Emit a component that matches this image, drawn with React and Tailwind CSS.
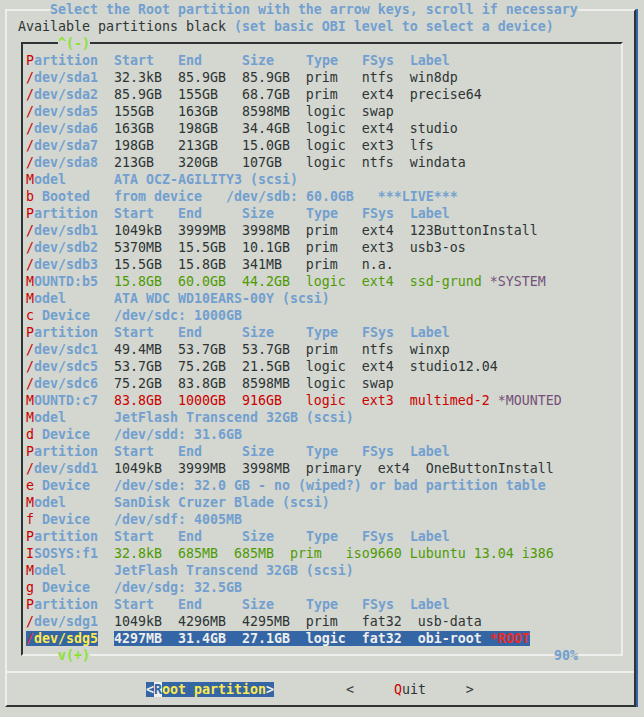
import React from "react";

const RED = "text-[#cc0000]";
const BLUE = "text-[#729fcf] font-bold";
const DARK = "text-[#2e3436]";
const GREEN = "text-[#4e9a06]";
const PURPLE = "text-[#75507b]";

function Row({ children, className = "" }) {
  return <div className={`h-[17px] pt-px whitespace-pre ${className}`}>{children}</div>;
}

function Header() {
  return (
    <Row>
      <span className={RED}>P</span>
      <span className={BLUE}>artition</span>
      {"  "}
      <span className={BLUE}>Start</span>
      {"   "}
      <span className={BLUE}>End</span>
      {"     "}
      <span className={BLUE}>Size</span>
      {"    "}
      <span className={BLUE}>Type</span>
      {"   "}
      <span className={BLUE}>FSys</span>
      {"  "}
      <span className={BLUE}>Label</span>
    </Row>
  );
}

function Part({ first, rest, vals, tone = DARK, suffix }) {
  return (
    <Row>
      <span className={RED}>{first}</span>
      <span className={BLUE}>{rest}</span>
      {"  "}
      <span className={tone}>{vals}</span>
      {suffix ? (
        <>
          {" "}
          <span className={PURPLE}>{suffix}</span>
        </>
      ) : null}
    </Row>
  );
}

function Model({ value }) {
  return (
    <Row>
      <span className={RED}>M</span>
      <span className={BLUE}>odel</span>
      {"      "}
      <span className={BLUE}>{value}</span>
    </Row>
  );
}

function Device({ letter, value }) {
  return (
    <Row>
      <span className={RED}>{letter}</span>
      {" "}
      <span className={BLUE}>Device</span>
      {"   "}
      <span className={BLUE}>{value}</span>
    </Row>
  );
}

export default function App() {
  return (
    <div className="w-[644px] h-[717px] bg-[#d3d7cf] pt-[9px] pl-[5px] font-['DejaVu_Sans_Mono',monospace] text-[13.29px] leading-[17px] text-[#2e3436] overflow-hidden">
      <div className="w-[631px] h-[698px] border-2 border-t-[#eeeeec] border-l-[#eeeeec] border-r-[#2e3436] border-b-[#2e3436] shadow-[2px_0_0_#3465a4] flex flex-col">
        {/* title */}
        <Row className="-mt-[11px] pl-[43px]">
          <span className="bg-[#d3d7cf] text-[#729fcf] font-bold">
            Select the Root partition with the arrow keys, scroll if necessary
          </span>
        </Row>
        <Row className="pl-[11px]">
          <span className={DARK}>Available partitions black </span>
          <span className={BLUE}>(set basic OBI level to select a device)</span>
        </Row>

        {/* list box */}
        <div className="ml-[14px] mt-[8px] w-[602px] h-[614px] border-2 border-t-[#2e3436] border-l-[#2e3436] border-r-[#eeeeec] border-b-[#eeeeec] pl-[3px] flex flex-col">
          <Row className="-mt-[10px] pl-[32px]">
            <span className="bg-[#d3d7cf] text-[#8ae234] font-bold">^(-)</span>
          </Row>
          <Header />
          <Part first="/" rest="dev/sda1" vals="32.3kB  85.9GB  85.9GB  prim   ntfs  win8dp" />
          <Part first="/" rest="dev/sda2" vals="85.9GB  155GB   68.7GB  prim   ext4  precise64" />
          <Part first="/" rest="dev/sda5" vals="155GB   163GB   8598MB  logic  swap" />
          <Part first="/" rest="dev/sda6" vals="163GB   198GB   34.4GB  logic  ext4  studio" />
          <Part first="/" rest="dev/sda7" vals="198GB   213GB   15.0GB  logic  ext3  lfs" />
          <Part first="/" rest="dev/sda8" vals="213GB   320GB   107GB   logic  ntfs  windata" />
          <Model value="ATA OCZ-AGILITY3 (scsi)" />
          <Row>
            <span className={RED}>b</span>
            {" "}
            <span className={BLUE}>Booted</span>
            {"   "}
            <span className={BLUE}>from device   /dev/sdb: 60.0GB   ***LIVE***</span>
          </Row>
          <Header />
          <Part first="/" rest="dev/sdb1" vals="1049kB  3999MB  3998MB  prim   ext4  123ButtonInstall" />
          <Part first="/" rest="dev/sdb2" vals="5370MB  15.5GB  10.1GB  prim   ext3  usb3-os" />
          <Part first="/" rest="dev/sdb3" vals="15.5GB  15.8GB  341MB   prim   n.a." />
          <Part first="M" rest="OUNTD:b5" vals="15.8GB  60.0GB  44.2GB  logic  ext4  ssd-grund" tone={GREEN} suffix="*SYSTEM" />
          <Model value="ATA WDC WD10EARS-00Y (scsi)" />
          <Device letter="c" value="/dev/sdc: 1000GB" />
          <Header />
          <Part first="/" rest="dev/sdc1" vals="49.4MB  53.7GB  53.7GB  prim   ntfs  winxp" />
          <Part first="/" rest="dev/sdc5" vals="53.7GB  75.2GB  21.5GB  logic  ext4  studio12.04" />
          <Part first="/" rest="dev/sdc6" vals="75.2GB  83.8GB  8598MB  logic  swap" />
          <Part first="M" rest="OUNTD:c7" vals="83.8GB  1000GB  916GB   logic  ext3  multimed-2" tone={RED} suffix="*MOUNTED" />
          <Model value="JetFlash Transcend 32GB (scsi)" />
          <Device letter="d" value="/dev/sdd: 31.6GB" />
          <Header />
          <Part first="/" rest="dev/sdd1" vals="1049kB  3999MB  3998MB  primary  ext4  OneButtonInstall" />
          <Device letter="e" value="/dev/sde: 32.0 GB - no (wiped?) or bad partition table" />
          <Model value="SanDisk Cruzer Blade (scsi)" />
          <Device letter="f" value="/dev/sdf: 4005MB" />
          <Header />
          <Part first="I" rest="SOSYS:f1" vals="32.8kB  685MB  685MB  prim   iso9660 Lubuntu 13.04 i386" tone={GREEN} />
          <Model value="JetFlash Transcend 32GB (scsi)" />
          <Device letter="g" value="/dev/sdg: 32.5GB" />
          <Header />
          <Part first="/" rest="dev/sdg1" vals="1049kB  4296MB  4295MB  prim   fat32  usb-data" />
          <Row>
            <span className="bg-[#3465a4]">
              <span className="text-[#ef2929]">/</span>
              <span className="text-[#fce94f] font-bold">dev/sdg5</span>
            </span>
            {"  "}
            <span className="bg-[#3465a4] text-[#eeeeec] font-bold">
              4297MB  31.4GB  27.1GB  logic  fat32  obi-root <span className="text-[#ef2929]">*ROOT</span>
            </span>
          </Row>
        </div>

        {/* bottom of list box: scroll indicator and percentage */}
        <Row className="-mt-[10px] pl-[51px] flex">
          <span className="bg-[#d3d7cf] text-[#8ae234] font-bold">v(+)</span>
          <span className="ml-[464px] bg-[#d3d7cf] text-[#729fcf] font-bold">90%</span>
        </Row>

        {/* separator */}
        <div className="mt-[8px] h-[2px] w-full bg-[#eeeeec]" />

        {/* buttons */}
        <Row className="mt-[7px] pl-[139px]">
          <span className="bg-[#3465a4]">
            <span className="text-[#eeeeec] font-bold">&lt;</span>
            <span className="bg-[#eeeeec] text-[#3465a4] font-bold">R</span>
            <span className="text-[#fce94f] font-bold">oot partition</span>
            <span className="text-[#eeeeec] font-bold">&gt;</span>
          </span>
          {"         "}
          <span className={DARK}>&lt;     </span>
          <span className={RED}>Q</span>
          <span className={DARK}>uit     &gt;</span>
        </Row>
      </div>
    </div>
  );
}
